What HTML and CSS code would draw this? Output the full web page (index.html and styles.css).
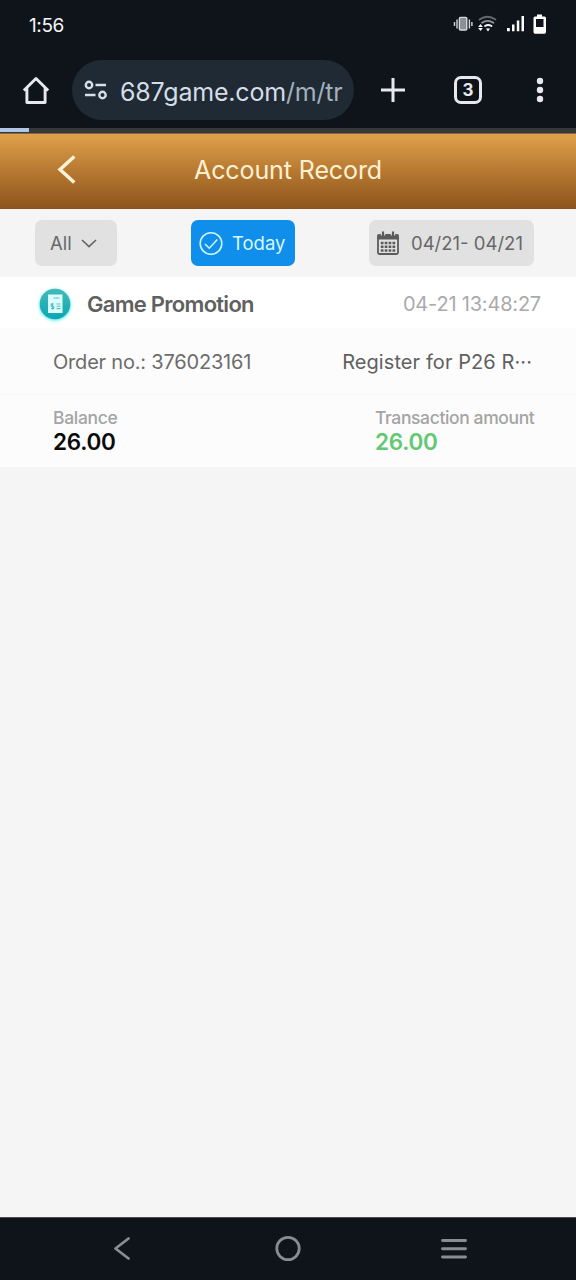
FILE: index.html
```html
<!DOCTYPE html>
<html lang="en">
<head>
<meta charset="utf-8">
<meta name="viewport" content="width=device-width">
<title>Account Record</title>
<link rel="stylesheet" href="styles.css">
</head>
<body>
<div class="status">
  <span class="clock">1:56</span>
  <svg class="status-icons" width="96" height="24" viewBox="452 12 96 24">
    <g fill="none" stroke="#d5d8dc" stroke-width="1.400">
      <rect x="459.400" y="17.400" width="7.400" height="12.600" rx="1" fill="#8c8f94"/>
      <path d="M457 19.500v9M454.500 22v4M469.400 19.500v9M471.900 22v4"/>
    </g>
    <g fill="none" stroke-width="1.800" stroke-linecap="round">
      <path d="M479.500 19.500Q487.500 14 495.500 19.500" stroke="#65696e"/>
      <path d="M482 22.800Q487.500 19 493.500 22.800" stroke="#92969a"/>
      <path d="M485 26Q488 24 491.500 26" stroke="#f4f5f6"/>
    </g>
    <path d="M480.500 24l2.300 3h-4.600zM480.500 31l2.300-3h-4.600zM488 31.500l-2-3h4z" fill="#fff"/>
    <path d="M507 28h2.800v3.200H507zM512 24.500h2.500v6.700H512zM516.800 20.500h2.500v10.700h-2.500zM521.500 16h2.500v15.200h-2.500z" fill="#fff"/>
    <path fill="#fff" fill-rule="evenodd" d="M537 14.500h5v2h2.500q1.500 0 1.500 1.500v14q0 1.700-1.500 1.700h-9.500q-1.500 0-1.500-1.700V18q0-1.500 1.500-1.500h2zM536 19v8h7.500v-8z"/>
  </svg>
</div>
<div class="browser">
  <svg class="home" width="28" height="30" viewBox="0 0 28 30" fill="none" stroke="#e7e9ee" stroke-width="2.900" stroke-linejoin="round"><path d="M1.800 15.500L14 3.500l12.200 12M4.900 13V27.500h18.200V13"/></svg>
  <div class="address">
    <svg width="24" height="20" viewBox="0 0 24 20" fill="none" stroke="#d7e0ea" stroke-width="2.400"><circle cx="5" cy="5" r="3.200"/><path d="M11.500 5H22M1 15h10.500"/><circle cx="18.500" cy="15" r="3.200"/></svg>
    <span class="url">687game.com<span class="path">/m/tr</span></span>
  </div>
  <svg class="plus" width="26" height="26" viewBox="0 0 26 26" fill="none" stroke="#e7e9ee" stroke-width="3"><path d="M1 13h24M13 1v24"/></svg>
  <div class="tabs">3</div>
  <svg class="more" width="8" height="26" viewBox="0 0 8 26" fill="#e7e9ee"><circle cx="4" cy="4" r="3.200"/><circle cx="4" cy="13" r="3.200"/><circle cx="4" cy="22" r="3.200"/></svg>
</div>
<div class="progress"><div class="progress-fill"></div></div>
<header class="title-bar">
  <svg class="back" width="20" height="30" viewBox="0 0 20 30" fill="none" stroke="#fff3d6" stroke-width="3.500"><path d="M17.300 1.500L3 14.500l14.300 13"/></svg>
  <h1 class="title">Account Record</h1>
</header>
<div class="filters">
  <div class="chip chip-all"><span>All</span><svg width="16" height="10" viewBox="0 0 16 10" fill="none" stroke="#666" stroke-width="1.700"><path d="M1 2l7 6.500L15 2"/></svg></div>
  <div class="chip chip-today"><svg width="24" height="24" viewBox="0 0 24 24" fill="none" stroke="#cbf5ff" stroke-width="1.600"><circle cx="12" cy="12.500" r="10.800"/><path d="M6 13l4.300 4.200 8-8.700"/></svg><span>Today</span></div>
  <div class="chip chip-date">
    <svg width="22" height="24" viewBox="0 0 22 24"><rect x="1" y="4" width="20" height="19" rx="1.500" fill="none" stroke="#5b5b5b" stroke-width="1.800"/><path d="M.5 3.500h21V8.500H.5z" fill="#5b5b5b"/><path d="M6 0v4.500M16 0v4.500" stroke="#e1e1e1" stroke-width="4.400"/><path d="M6 .5v4.500M16 .5v4.500" stroke="#5b5b5b" stroke-width="2.200"/><path d="M3.800 12h14.400M3.800 15.800h14.400M3.800 19.600h14.400" stroke="#5b5b5b" stroke-width="2.500" stroke-dasharray="2.700 1.200"/></svg>
    <span>04/21- 04/21</span>
  </div>
</div>
<main class="record">
  <div class="record-head">
    <svg class="badge" width="40" height="40" viewBox="0 0 40 40">
      <defs><linearGradient id="teal" x1="0" y1="0" x2="0" y2="1"><stop offset="0" stop-color="#45b9ba"/><stop offset="1" stop-color="#0ba7b0"/></linearGradient></defs>
      <circle class="glow" cx="20" cy="21" r="15.700" fill="#5cecf0"/>
      <circle cx="20" cy="20" r="15.300" fill="url(#teal)"/>
      <path d="M13 10.500h14.500V29H13z" fill="#dcffff"/>
      <path d="M18.500 14h6M21.500 20h4M21.500 22.300h4M21.500 24.600h4M18.700 20h-2.500v2.200h2.500v2.400h-2.700M17.400 19v6.500" fill="none" stroke="#58bfc1" stroke-width="1.100"/>
    </svg>
    <span class="kind">Game Promotion</span>
    <span class="time">04-21 13:48:27</span>
  </div>
  <div class="record-order"><span class="order">Order no.: 376023161</span><span class="note">Register for P26 R···</span></div>
  <div class="record-money">
    <div><div class="label balance-label">Balance</div><div class="value">26.00</div></div>
    <div class="amount"><div class="label">Transaction amount</div><div class="value gain">26.00</div></div>
  </div>
</main>
<nav class="system-nav">
  <svg width="18" height="26" viewBox="0 0 18 26" fill="none" stroke="#898c91" stroke-width="2.800" stroke-linecap="round" stroke-linejoin="round"><path d="M15.500 2.500L2.500 12.500l13 10"/></svg>
  <svg class="nav-home" width="28" height="28" viewBox="0 0 28 28" fill="none" stroke="#898c91" stroke-width="2.800"><circle cx="14" cy="13.500" r="11.200"/></svg>
  <svg width="28" height="24" viewBox="0 0 28 24" fill="none" stroke="#898c91" stroke-width="2.900" stroke-linecap="round"><path d="M2.500 3.500h23M2.500 11.800h23M2.500 20h23"/></svg>
</nav>
</body>
</html>
```
FILE: styles.css
```css
* { box-sizing: border-box; }
body { margin: 0; width: 576px; height: 1280px; display: flex; flex-direction: column; background: #f5f5f5; font-family: Inter, "Liberation Sans", sans-serif; white-space: nowrap; overflow: hidden; }
svg { display: block; flex: none; }
.status { height: 50px; display: flex; justify-content: space-between; padding: 12px 28px 0 29px; background: #0f131a; }
.clock { color: #f5f6f7; font-size: 19px; line-height: 27px; letter-spacing: -.4px; }
.browser { height: 78px; display: flex; align-items: center; background: #0f131a; padding: 2px 0 0 22px; }
.address { width: 282px; height: 60px; margin-left: 22px; padding-left: 12px; border-radius: 30px; background: #1f2a34; display: flex; align-items: center; gap: 12px; }
.url { color: #d5dde7; font-size: 25px; line-height: 32px; letter-spacing: -.2px; padding-top: 3px; }
.path { color: #a4b0bd; }
.plus { margin-left: 26px; }
.tabs { width: 28px; height: 28px; margin-left: 48px; border: 3px solid #e7e9ee; border-radius: 7px; color: #e7e9ee; font-size: 17px; font-weight: 700; line-height: 22px; text-align: center; }
.more { margin-left: 54px; }
.progress { height: 6px; background: #34383b; border-bottom: 1px solid #846543; }
.progress-fill { width: 29px; height: 4px; background: #b0c7e8; }
.title-bar { height: 75px; display: flex; align-items: center; padding: 0 0 3px 57px; background: linear-gradient(#dfa149, #b87a32 48%, #8c541c); }
.title { margin: 0 0 0 117px; color: #fff1d2; font-size: 25px; font-weight: 400; line-height: 30px; letter-spacing: -.1px; }
.filters { height: 68px; padding: 11px 42px 0 35px; display: flex; justify-content: space-between; align-items: flex-start; border-bottom: 1px solid #f8f8f8; }
.chip { height: 46px; border-radius: 7px; background: #e1e1e1; color: #686868; display: flex; align-items: center; font-size: 18.500px; }
.chip-all { width: 82px; padding-left: 15px; gap: 9px; }
.chip-today { width: 104px; padding-left: 8px; gap: 9px; background: #108eeb; color: #d8f8ff; }
.chip-date { width: 165px; padding-left: 8px; gap: 12px; }
.record { height: 190px; background: #fcfcfc; }
.record-head { height: 51px; padding: 2px 35px 0 35px; display: flex; align-items: center; background: #fff; }
.glow { filter: blur(1.500px); }
.kind { margin-left: 12px; color: #606060; font-size: 22px; font-weight: 600; letter-spacing: -.72px; }
.time { margin-left: auto; color: #aaa; font-size: 20px; letter-spacing: -.2px; }
.record-order { height: 67px; padding: 1px 44px 0 53px; display: flex; justify-content: space-between; align-items: center; color: #6c6c6c; font-size: 20px; border-bottom: 1px solid #f7f7f7; }
.order { letter-spacing: -.2px; }
.note { color: #606060; letter-spacing: .08px; }
.record-money { height: 72px; display: grid; grid-template-columns: 322px 1fr; padding: 12px 0 0 53px; }
.label { color: #a4a4a4; font-size: 17.500px; font-weight: 500; line-height: 22px; letter-spacing: -.38px; }
.balance-label { letter-spacing: -.3px; }
.value { color: #0a0a0a; font-size: 22.500px; font-weight: 600; line-height: 25px; letter-spacing: -.25px; }
.gain { color: #62c973; }
.system-nav { height: 63px; margin-top: auto; padding: 0 108px 0 113px; display: flex; align-items: center; justify-content: space-between; background: #0f131a; border-top: 1px solid #4b4e53; }
.nav-home { margin-left: 5px; }
```
